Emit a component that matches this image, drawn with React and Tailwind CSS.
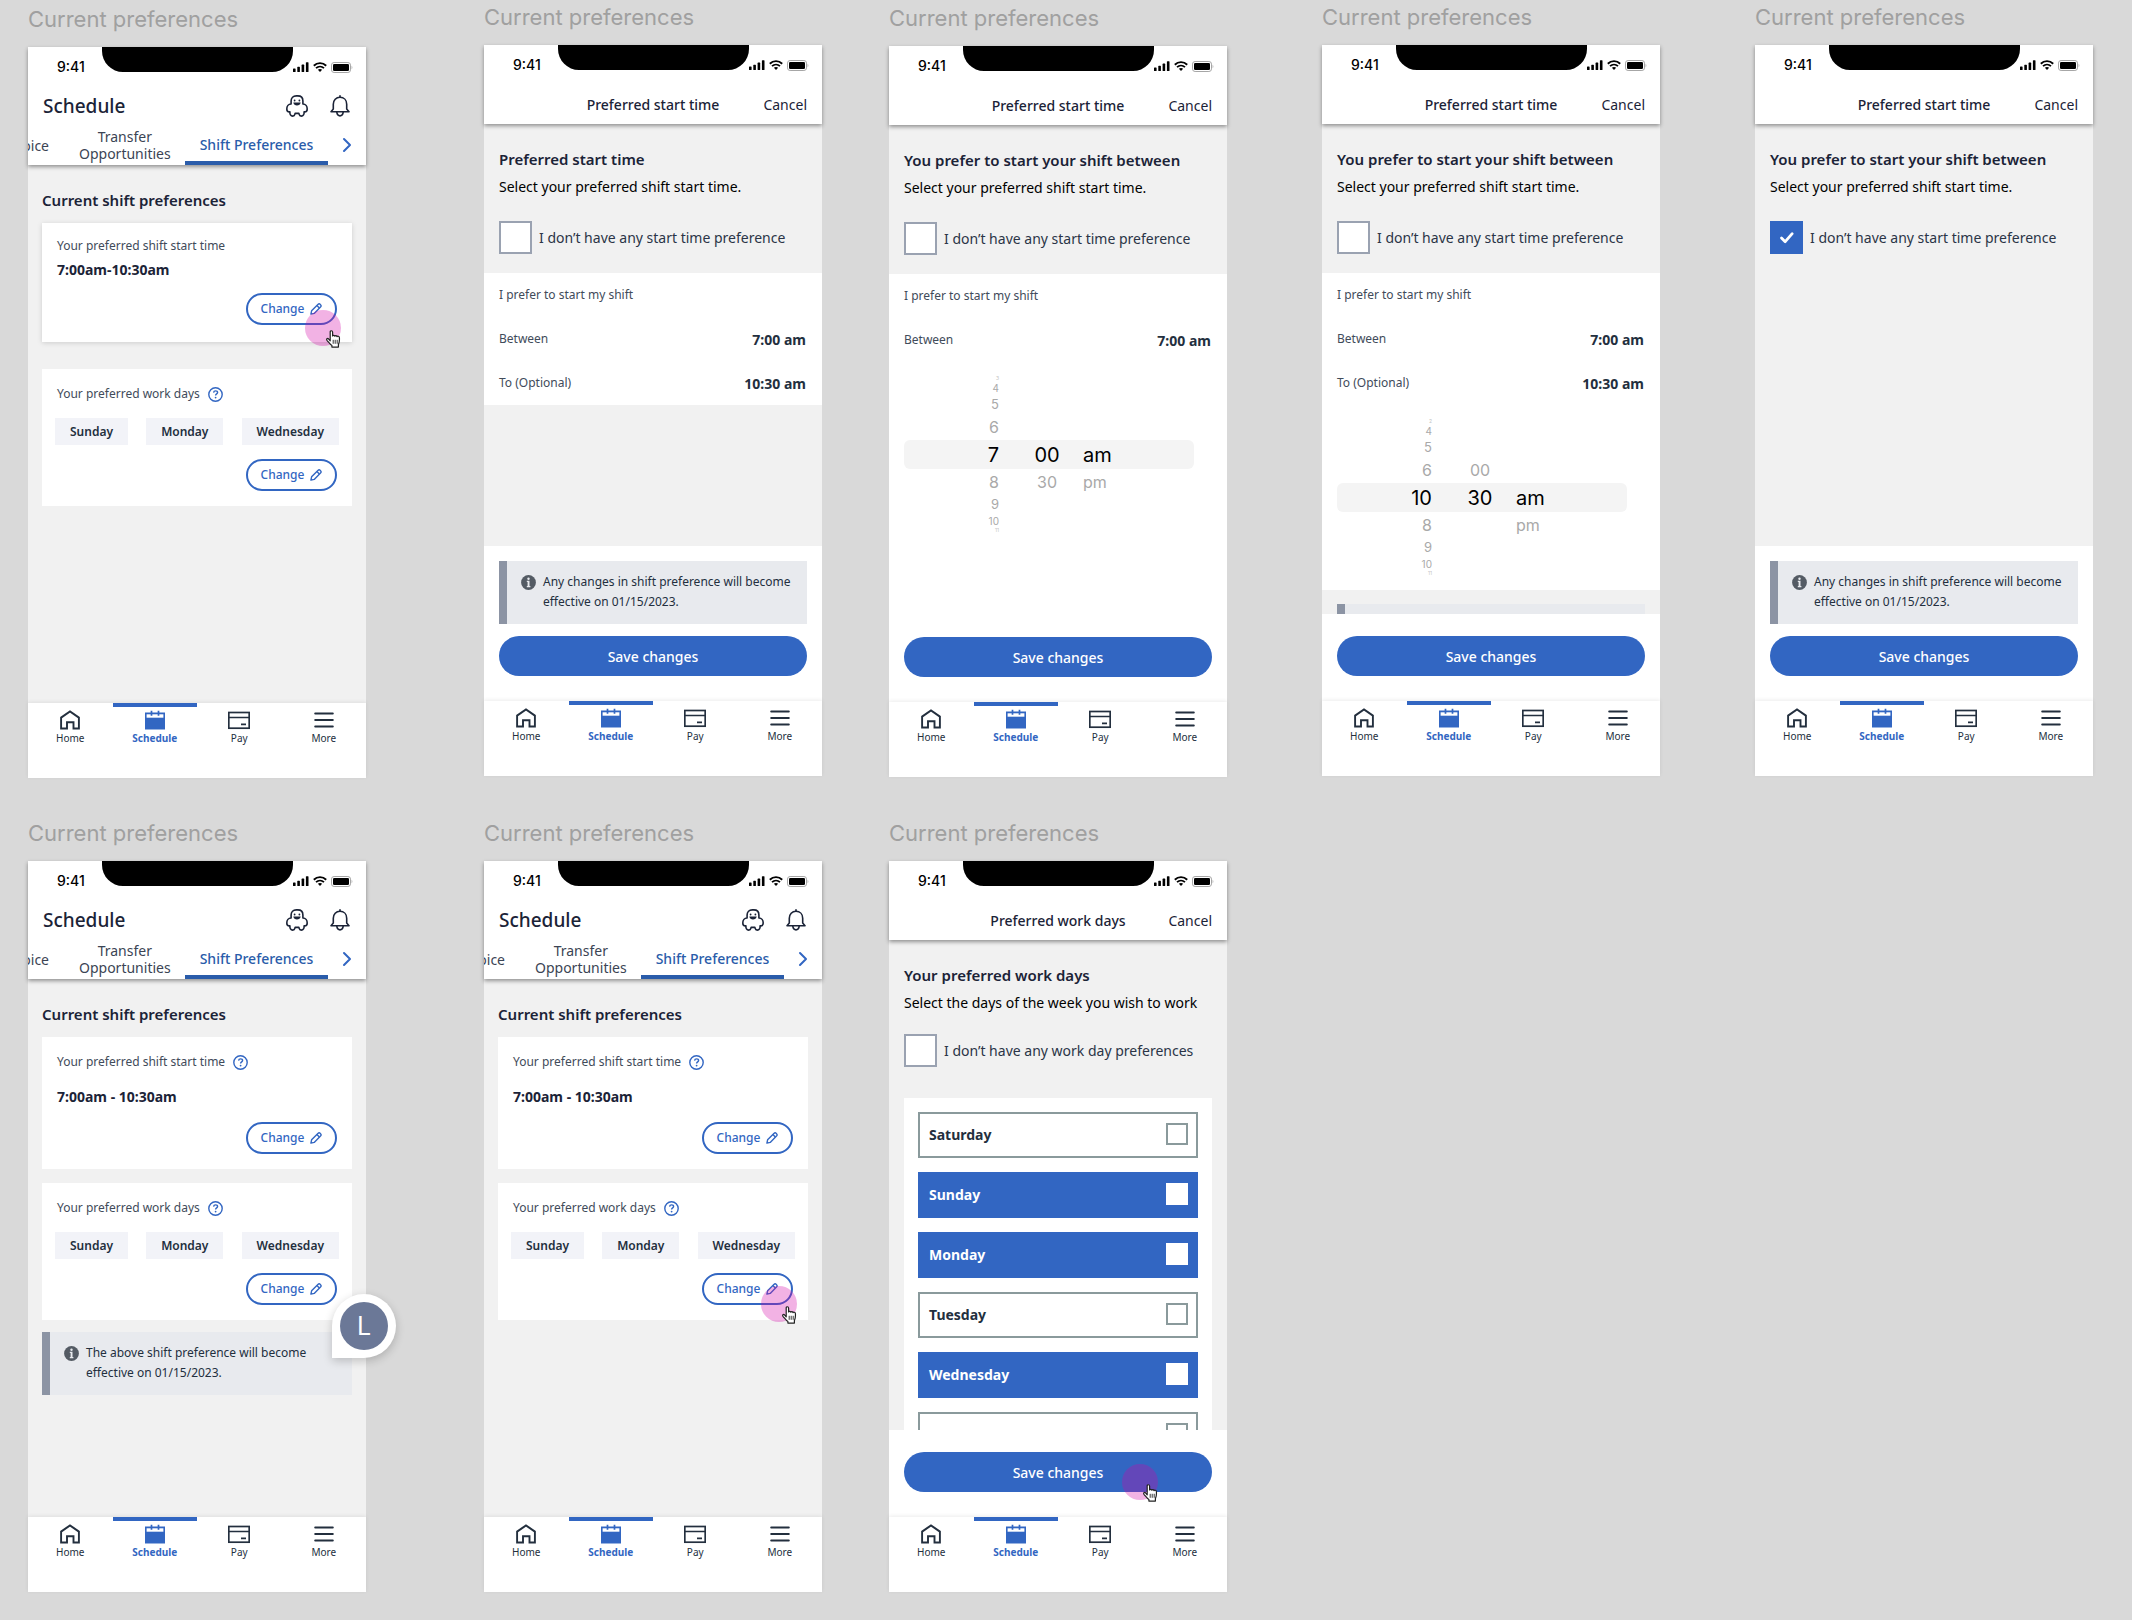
import React from "react";
import { ChevronRight } from "lucide-react";

/* ---------- icons ---------- */

function SignalIcon() {
  return (
    <svg viewBox="0 0 16 10" className="h-[10px] w-4" fill="#000" aria-hidden="true">
      <rect x="0" y="6.5" width="2.6" height="3.5" rx="0.6" />
      <rect x="4.3" y="4.8" width="2.6" height="5.2" rx="0.6" />
      <rect x="8.6" y="2.6" width="2.6" height="7.4" rx="0.6" />
      <rect x="12.9" y="0.2" width="2.6" height="9.8" rx="0.6" />
    </svg>
  );
}

function WifiIcon() {
  return (
    <svg viewBox="0 0 14 10" className="h-[10px] w-[14px]" fill="none" stroke="#000" aria-hidden="true">
      <path d="M0.8 3.7C4.3 0.3 9.7 0.3 13.2 3.7" strokeWidth="1.9" />
      <path d="M3 6.1c2.3-2.1 5.7-2.1 8 0" strokeWidth="1.8" />
      <path d="M7 9.9 4.9 7.8c1.2-1 3-1 4.2 0z" fill="#000" stroke="none" />
    </svg>
  );
}

function BatteryIcon() {
  return (
    <svg viewBox="0 0 22 11" className="h-[11px] w-[22px]" aria-hidden="true">
      <rect x="0.5" y="0.5" width="19" height="10" rx="2.6" fill="#fff" stroke="#a6a6a6" />
      <rect x="2" y="2" width="16" height="7" rx="1.3" fill="#000" />
      <path d="M20.6 3.8c1 .5 1 2.9 0 3.4z" fill="#a6a6a6" />
    </svg>
  );
}

function MascotIcon() {
  return (
    <svg viewBox="0 0 22 22" className="size-[22px]" fill="none" stroke="#1b2337" strokeWidth="1.6" strokeLinejoin="round" aria-hidden="true">
      <path d="M5.1 9V6C5.1 2.800 7.200.9 10.200.9h1.600c3 0 5.100 1.900 5.100 5.100v3c2.700.1 4.300 2.400 4.300 4.900 0 1.900-.9 3-2.500 3h-.6c.2 2.500-.8 4.200-2.800 4.200-1.200 0-1.900-.6-2.100-1.700l-.3-1H9.100l-.3 1c-.2 1.100-.9 1.700-2.100 1.700-2 0-3-1.700-2.800-4.200h-.6c-1.600 0-2.500-1.100-2.500-3C.8 11.400 2.400 9.100 5.100 9z" />
      <circle cx="8.6" cy="5.5" r="0.9" fill="#1b2337" stroke="none" />
      <circle cx="13.4" cy="5.5" r="0.9" fill="#1b2337" stroke="none" />
      <path d="M7.3 7.600h7.400c-.3 1.900-1.800 3-3.700 3s-3.400-1.100-3.700-3z" fill="#1b2337" stroke="none" />
    </svg>
  );
}

function BellIcon() {
  return (
    <svg viewBox="0 0 20 22" className="h-[22px] w-5" fill="none" stroke="#1b2337" strokeWidth="1.6" strokeLinejoin="round" strokeLinecap="round" aria-hidden="true">
      <path d="M10 0.9v1.4" />
      <path d="M1 16.700l2.300-2.700V9.200c0-4.100 2.800-6.900 6.700-6.900s6.700 2.800 6.700 6.900V14l2.300 2.700z" />
      <path d="M6.800 17.200c.3 2.300 1.500 3.700 3.200 3.700s2.900-1.400 3.200-3.700" />
    </svg>
  );
}

function HelpIcon() {
  return (
    <svg viewBox="0 0 15 15" className="size-[15px]" fill="none" stroke="#3266c2" aria-hidden="true">
      <circle cx="7.5" cy="7.5" r="6.7" strokeWidth="1.4" />
      <path d="M5.600 5.600c.1-1.100.9-1.700 2-1.700s2 .7 2 1.700c0 1.300-2 1.400-2 3" strokeWidth="1.4" />
      <circle cx="7.6" cy="10.6" r="0.9" fill="#3266c2" stroke="none" />
    </svg>
  );
}

function PencilIcon() {
  return (
    <svg viewBox="0 0 12 12" className="size-3" fill="none" stroke="currentColor" strokeWidth="1.4" strokeLinejoin="round" aria-hidden="true">
      <path d="M0.900 11.100l.7-3.300L7.900 1.500c.8-.8 1.600-.8 2.200-.2l.6.600c.6.600.6 1.400-.2 2.200L4.200 10.400z" />
      <path d="M6.900 2.600l2.500 2.500" />
    </svg>
  );
}

function InfoIcon() {
  return (
    <svg viewBox="0 0 15 15" className="size-[15px] shrink-0" aria-hidden="true">
      <circle cx="7.5" cy="7.5" r="7.4" fill="#545b64" />
      <circle cx="7.5" cy="3.7" r="1.2" fill="#e8eaee" />
      <path d="M5.800 5.800h2.700v5.200h.9v1.200H5.800V11h.8V7h-.8z" fill="#e8eaee" />
    </svg>
  );
}

function HomeIcon() {
  return (
    <svg viewBox="0 0 20 20" className="size-5" fill="none" stroke="#232f3e" strokeWidth="1.9" aria-hidden="true">
      <path d="M1.100 18.500V7.600L10 1.500l8.900 6.100v10.900h-5.400v-6.300H7v6.300z" />
    </svg>
  );
}

function CalendarIcon() {
  return (
    <svg viewBox="0 0 20 20" className="size-5" aria-hidden="true">
      <path d="M0 2.500h20V19.500H0z" fill="#3266c2" />
      <path d="M1.600 4.300h16.800V7.700H1.600z" fill="#fff" />
      <path d="M6.500 0.800v5M13.500 0.800v5" stroke="#3266c2" strokeWidth="1.7" />
    </svg>
  );
}

function CardIcon() {
  return (
    <svg viewBox="0 0 22 20" className="h-5 w-[22px]" fill="none" stroke="#232f3e" strokeWidth="1.7" aria-hidden="true">
      <rect x="0.8" y="2.500" width="20.400" height="15.700" />
      <path d="M0.800 7.500h20.400M13 14.300h5" />
    </svg>
  );
}

function MenuIcon() {
  return (
    <svg viewBox="0 0 20 20" className="size-5" fill="none" stroke="#232f3e" strokeWidth="2" strokeLinecap="round" aria-hidden="true">
      <path d="M1.200 3.500h17.600M1.200 10h17.600M1.200 16.500h17.600" />
    </svg>
  );
}

/* Tap marker with a hand pointer, laid over the control it points at. */
function TapMarker({ className }) {
  return (
    <span className={"pointer-events-none absolute z-10 size-9 rounded-full bg-[#d600a5]/30 " + className} aria-hidden="true">
      <svg viewBox="0 0 15 18" className="absolute top-5 left-[21px] h-[18px] w-[15px]" fill="#fff" stroke="#222" strokeWidth="1.2" strokeLinejoin="round">
        <path d="M4.200 10.800V2c0-1.700 2.300-1.700 2.400 0v3.900c.4-.9 2-.8 2.200.3.500-.8 2-.7 2.200.4.500-.7 2.200-.5 2.400.9.200 2.600.2 4.900-1 7.100v2.500H5.900v-1.600C4 14.200 2.600 12.100 1 10.300c-.9-1.200.4-2.300 1.500-1.500z" />
        <path d="M7.200 9.800v4M9.200 9.800v4M11.200 9.800v4" fill="none" strokeWidth="0.9" />
      </svg>
    </span>
  );
}

/* ---------- shared phone parts ---------- */

function StatusBar() {
  return (
    <div className="grid h-10 grid-cols-[1fr_191px_1fr] items-center">
      <span className="pl-[29px] font-[Inter,sans-serif] text-[14px] leading-5 font-medium text-black">9:41</span>
      <span className="h-[25px] self-start rounded-b-[21px] bg-black" />
      <span className="flex items-center gap-1">
        <SignalIcon />
        <WifiIcon />
        <BatteryIcon />
      </span>
    </div>
  );
}

function ScheduleHeader() {
  return (
    <header className="relative z-10 bg-white shadow-[0_2px_4px_rgba(0,0,0,0.4)]">
      <StatusBar />
      <div className="flex h-[38px] items-center justify-between pr-4 pl-[15px]">
        <h1 className="text-[19px] leading-6 font-medium text-[#1b2337]">Schedule</h1>
        <div className="flex items-center gap-[22px]">
          <button type="button" aria-label="Assistant"><MascotIcon /></button>
          <button type="button" aria-label="Notifications"><BellIcon /></button>
        </div>
      </div>
      <nav className="flex h-10 items-stretch text-[14px] leading-[17px] text-[#3b4454]">
        <a href="#choice" className="flex w-[37px] items-center justify-end overflow-hidden pr-4">oice</a>
        <a href="#transfer" className="flex items-center px-3.5 text-center">Transfer<br />Opportunities</a>
        <a href="#shift" className="flex items-center border-b-4 border-[#2a5caa] px-[15px] pt-0.5 font-medium whitespace-nowrap text-[#2a5caa]">Shift Preferences</a>
        <button type="button" aria-label="More tabs" className="flex flex-1 items-center justify-center text-[#3266c2]">
          <ChevronRight size={24} strokeWidth={2} />
        </button>
      </nav>
    </header>
  );
}

function ModalHeader({ title }) {
  return (
    <header className="relative z-10 bg-white shadow-[0_2px_4px_rgba(0,0,0,0.4)]">
      <StatusBar />
      <div className="grid h-[39px] grid-cols-[1fr_auto_1fr] items-center px-[15px] text-[14px] leading-5 text-[#1b2337]">
        <h1 className="col-start-2 font-medium">{title}</h1>
        <button type="button" className="justify-self-end">Cancel</button>
      </div>
    </header>
  );
}

function NavItem({ label, active, children }) {
  return (
    <a
      href={"#" + label.toLowerCase()}
      className={
        "flex flex-1 flex-col items-center border-t-4 pt-[3px] text-[10px] " +
        (active ? "border-[#3266c2] font-bold text-[#3266c2]" : "border-transparent text-[#232f3e]")
      }
    >
      {children}
      <span className="mt-px leading-[14px]">{label}</span>
    </a>
  );
}

function BottomNav() {
  return (
    <nav className="relative flex h-[75px] shrink-0 bg-white shadow-[0_-1px_4px_rgba(0,0,0,0.08)]">
      <NavItem label="Home"><HomeIcon /></NavItem>
      <NavItem label="Schedule" active><CalendarIcon /></NavItem>
      <NavItem label="Pay"><CardIcon /></NavItem>
      <NavItem label="More"><MenuIcon /></NavItem>
    </nav>
  );
}

function Notice({ children }) {
  return (
    <div className="flex gap-[7px] border-l-8 border-[#8c94a4] bg-[#e8eaee] pt-[11px] pr-3 pb-3 pl-3.5 text-[12px] leading-5 text-[#232f3e]">
      <span className="flex h-5 items-center"><InfoIcon /></span>
      <p>{children}</p>
    </div>
  );
}

function ChangeButton({ marker }) {
  return (
    <div className="relative">
      <button type="button" className="flex h-8 w-[91px] items-center justify-center gap-1.5 rounded-full border-2 border-[#3266c2] text-[12px] font-medium text-[#3266c2]">
        Change
        <PencilIcon />
      </button>
      {marker && <TapMarker className={marker} />}
    </div>
  );
}

function SaveBar({ children, marker }) {
  return (
    <div className={"bg-white px-[15px] pb-[25px] " + (children ? "pt-[15px]" : "pt-[22px]")}>
      {children && <div className="mb-3">{children}</div>}
      <div className="relative">
        <button type="button" className="h-10 w-full rounded-full bg-[#3266c2] text-[14px] font-medium text-white">Save changes</button>
        {marker && <TapMarker className={marker} />}
      </div>
    </div>
  );
}

function Screen({ place, children, shift = "" }) {
  return (
    <section className={place + " " + shift}>
      <h2 className="mb-3.5 font-[Inter,sans-serif] text-[22px] leading-7 text-[#a0a0a0]">Current preferences</h2>
      <div className="relative flex h-[731px] flex-col bg-[#f1f1f1]">{children}</div>
    </section>
  );
}

/* ---------- overview screens ---------- */

function StartTimeCard() {
  return (
    <div className="bg-white px-[15px] py-[15px]">
      <div className="flex h-5 items-center gap-2 text-[12px] text-[#414b5a]">
        Your preferred shift start time
        <button type="button" aria-label="About shift start time"><HelpIcon /></button>
      </div>
      <p className="mt-[15px] text-[14px] leading-5 font-bold text-[#1b2337]">7:00am - 10:30am</p>
      <div className="mt-[15px] flex justify-end"><ChangeButton /></div>
    </div>
  );
}

function WorkDaysCard({ marker }) {
  return (
    <div className="bg-white px-[15px] py-[15px]">
      <div className="flex h-5 items-center gap-2 text-[12px] text-[#414b5a]">
        Your preferred work days
        <button type="button" aria-label="About work days"><HelpIcon /></button>
      </div>
      <ul className="-mx-0.5 mt-3.5 flex justify-between text-[12px] leading-[27px] font-semibold text-[#232f3e]">
        {["Sunday", "Monday", "Wednesday"].map((day) => (
          <li key={day} className="bg-[#f2f3f8] px-[15px]">{day}</li>
        ))}
      </ul>
      <div className="mt-3.5 flex justify-end"><ChangeButton marker={marker} /></div>
    </div>
  );
}

function Overview({ children }) {
  return (
    <>
      <ScheduleHeader />
      <main className="flex-1 px-3.5 pt-[25px]">
        <h2 className="mb-[13px] text-[15px] leading-5 font-semibold text-[#1b2337]">Current shift preferences</h2>
        {children}
      </main>
      <BottomNav />
    </>
  );
}

/* ---------- edit screens ---------- */

function EditIntro({ title, text, option, checked, spacing = "mt-6 mb-[19px]" }) {
  return (
    <div className="flex flex-col px-[15px] pt-[25px]">
      <h2 className="text-[15px] leading-5 font-semibold whitespace-nowrap text-[#1b2337]">{title}</h2>
      <p className="mt-2 text-[14px] leading-5 text-black">{text}</p>
      <label className={"flex items-center gap-[7px] text-[14px] leading-5 text-[#2b3547] " + spacing}>
        <span className="relative flex shrink-0">
          <input
            type="checkbox"
            defaultChecked={checked}
            className="peer size-[33px] appearance-none border-2 border-[#9aa2b1] bg-white checked:border-[#3266c2] checked:bg-[#3266c2]"
          />
          <svg viewBox="0 0 33 33" className="pointer-events-none absolute inset-0 hidden size-[33px] peer-checked:block" fill="none" stroke="#fff" strokeWidth="2.8" aria-hidden="true">
            <path d="M11.500 17l3.700 3.700 7-8" strokeLinecap="round" strokeLinejoin="round" />
          </svg>
        </span>
        {option}
      </label>
    </div>
  );
}

function TimeRow({ label, value }) {
  return (
    <div className="flex h-11 items-center justify-between pr-4 pl-[15px] text-[12px] text-[#414b5a]">
      <span>{label}</span>
      {value && <span className="text-[14px] font-bold text-[#232f3e]">{value}</span>}
    </div>
  );
}

const wheelSteps = [
  "h-[5px] text-[5px] text-[#c4c4c4]",
  "h-3.5 text-[10px] text-[#a9a9a9]",
  "h-[19px] text-[13px] text-[#a9a9a9]",
  "h-[26px] text-[16px] text-[#a9a9a9]",
  "h-[29px] rounded-md bg-[#f4f4f4] text-[20px] text-black",
  "h-[26px] text-[16px] text-[#a9a9a9]",
  "h-[19px] text-[13px] text-[#a9a9a9]",
  "h-3.5 text-[10px] text-[#a9a9a9]",
  "h-[5px] text-[5px] text-[#c4c4c4]",
];

function TimeWheel({ hours, minutes, periods }) {
  return (
    <div className="mr-[33px] ml-[15px] py-3.5 font-[Inter,sans-serif]">
      {hours.map((hour, i) => (
        <div key={i} className={"grid grid-cols-[95px_84px_1fr] items-center leading-none " + wheelSteps[i]}>
          <span className="text-right">{hour}</span>
          <span className="pl-3 text-center">{minutes[i]}</span>
          <span>{periods[i]}</span>
        </div>
      ))}
    </div>
  );
}

function DayOption({ day, name, selected }) {
  return (
    <label
      className={
        "flex h-[46px] items-center border-2 pr-2 pb-0.5 pl-[9px] text-[14px] font-bold " +
        (selected ? "border-[#3266c2] bg-[#3266c2] text-white" : "border-[#8a9a9c] bg-white text-[#232f3e]")
      }
    >
      {day}
      <input
        type="checkbox"
        defaultChecked={selected}
        aria-label={name}
        className="ml-auto size-[22px] appearance-none border-2 border-[#8a9a9c] bg-white checked:border-white"
      />
    </label>
  );
}

export default function App() {
  return (
    <div className="min-h-screen bg-[#d9d9d9] pt-[3px] pb-7 pl-7 font-['Noto_Sans',sans-serif]">
      <div className="grid grid-cols-[338fr_118fr_338fr_67fr_338fr_95fr_338fr_95fr_338fr_39fr] gap-y-[41px]">
        <Screen place="col-start-1 row-start-1" shift="pt-0.5">
          <Overview>
            <div className="bg-white px-[15px] pt-[13px] pb-[17px] shadow-[0_1px_5px_rgba(0,0,0,0.15)]">
              <p className="text-[12px] leading-5 text-[#414b5a]">Your preferred shift start time</p>
              <p className="mt-1 text-[14px] leading-5 font-bold text-[#1b2337]">7:00am-10:30am</p>
              <div className="mt-[13px] flex justify-end"><ChangeButton marker="top-[17px] left-[59px]" /></div>
            </div>
            <div className="mt-[27px]"><WorkDaysCard /></div>
          </Overview>
        </Screen>

        <Screen place="col-start-3 row-start-1">
          <ModalHeader title="Preferred start time" />
          <main className="min-h-0 flex-1 overflow-hidden">
            <EditIntro title="Preferred start time" text="Select your preferred shift start time." option="I don’t have any start time preference" />
            <div className="bg-white">
              <TimeRow label="I prefer to start my shift" />
              <TimeRow label="Between" value="7:00 am" />
              <TimeRow label="To (Optional)" value="10:30 am" />
            </div>
          </main>
          <SaveBar><Notice>Any changes in shift preference will become effective on 01/15/2023.</Notice></SaveBar>
          <BottomNav />
        </Screen>

        <Screen place="col-start-5 row-start-1" shift="pt-px">
          <ModalHeader title="Preferred start time" />
          <main className="flex min-h-0 flex-1 flex-col overflow-hidden">
            <EditIntro title="You prefer to start your shift between" text="Select your preferred shift start time." option="I don’t have any start time preference" />
            <div className="flex-1 bg-white">
              <TimeRow label="I prefer to start my shift" />
              <TimeRow label="Between" value="7:00 am" />
              <TimeWheel
                hours={["3", "4", "5", "6", "7", "8", "9", "10", "11"]}
                minutes={["", "", "", "", "00", "30", "", "", ""]}
                periods={["", "", "", "", "am", "pm", "", "", ""]}
              />
            </div>
          </main>
          <SaveBar />
          <BottomNav />
        </Screen>

        <Screen place="col-start-7 row-start-1">
          <ModalHeader title="Preferred start time" />
          <main className="min-h-0 flex-1 overflow-hidden">
            <EditIntro title="You prefer to start your shift between" text="Select your preferred shift start time." option="I don’t have any start time preference" />
            <div className="bg-white">
              <TimeRow label="I prefer to start my shift" />
              <TimeRow label="Between" value="7:00 am" />
              <TimeRow label="To (Optional)" value="10:30 am" />
              <TimeWheel
                hours={["2", "4", "5", "6", "10", "8", "9", "10", "11"]}
                minutes={["", "", "", "00", "30", "", "", "", ""]}
                periods={["", "", "", "", "am", "pm", "", "", ""]}
              />
            </div>
            <div className="mx-[15px] mt-3.5 h-[63px] border-l-8 border-[#8c94a4] bg-[#e8eaee]" />
          </main>
          <SaveBar />
          <BottomNav />
        </Screen>

        <Screen place="col-start-9 row-start-1">
          <ModalHeader title="Preferred start time" />
          <main className="min-h-0 flex-1">
            <EditIntro checked title="You prefer to start your shift between" text="Select your preferred shift start time." option="I don’t have any start time preference" />
          </main>
          <SaveBar><Notice>Any changes in shift preference will become effective on 01/15/2023.</Notice></SaveBar>
          <BottomNav />
        </Screen>

        <Screen place="col-start-1 row-start-2">
          <Overview>
            <StartTimeCard />
            <div className="mt-3.5"><WorkDaysCard /></div>
            <div className="mt-3"><Notice>The above shift preference will become effective on 01/15/2023.</Notice></div>
          </Overview>
          <div className="absolute top-[433px] left-[304px] flex size-16 items-center justify-center rounded-full rounded-bl-none bg-white shadow-[0_3px_10px_rgba(0,0,0,0.2)]">
            <span className="flex size-12 items-center justify-center rounded-full bg-[#6b7897] font-[Inter,sans-serif] text-[25px] leading-none text-white">L</span>
          </div>
        </Screen>

        <Screen place="col-start-3 row-start-2">
          <Overview>
            <StartTimeCard />
            <div className="mt-3.5"><WorkDaysCard marker="top-[13px] left-[59px]" /></div>
          </Overview>
        </Screen>

        <Screen place="col-start-5 row-start-2">
          <ModalHeader title="Preferred work days" />
          <main className="min-h-0 flex-1 overflow-hidden">
            <EditIntro
              title="Your preferred work days"
              text="Select the days of the week you wish to work"
              option="I don’t have any work day preferences"
              spacing="mt-[21px] mb-[31px]"
            />
            <div className="mx-[15px] flex flex-col gap-3.5 bg-white p-3.5">
              <DayOption day="Saturday" />
              <DayOption day="Sunday" selected />
              <DayOption day="Monday" selected />
              <DayOption day="Tuesday" />
              <DayOption day="Wednesday" selected />
              <DayOption name="Thursday" />
            </div>
          </main>
          <SaveBar marker="top-3 left-[218px]" />
          <BottomNav />
        </Screen>
      </div>
    </div>
  );
}
